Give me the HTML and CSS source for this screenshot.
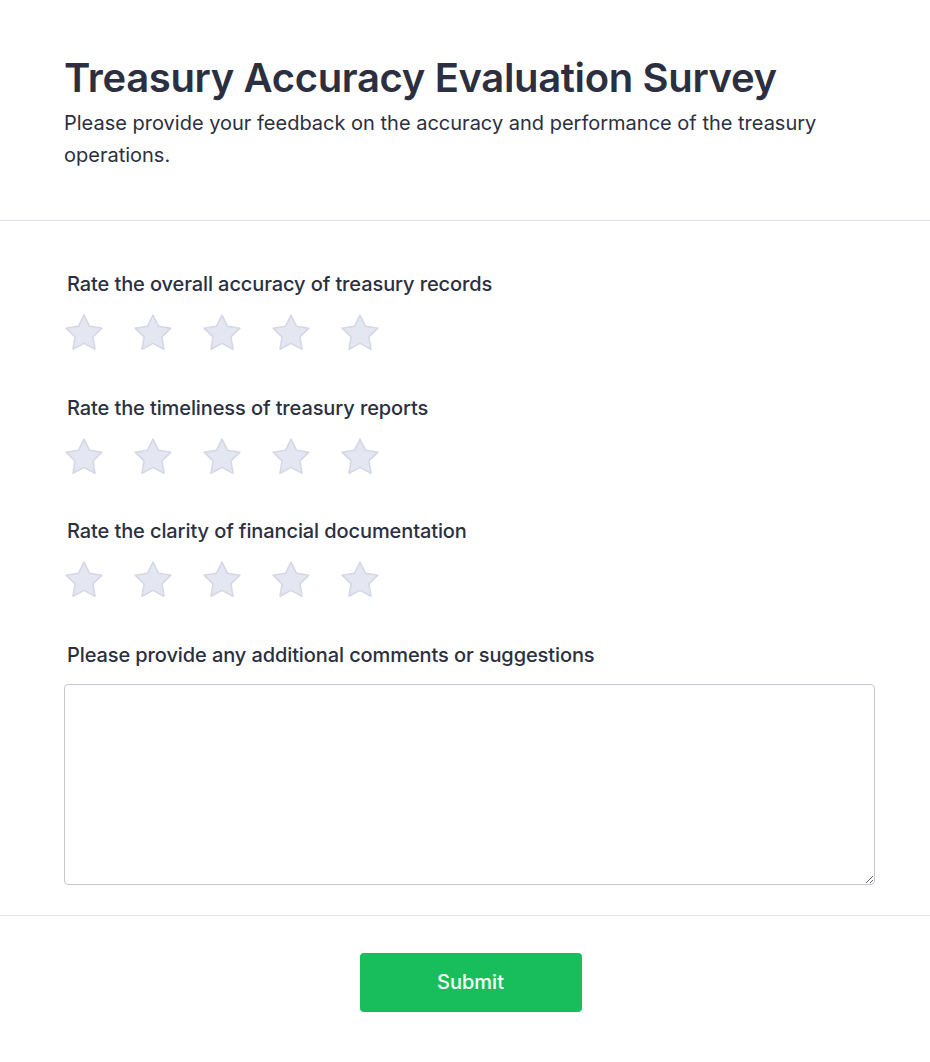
FILE: index.html
```html
<!DOCTYPE html>
<html lang="en">
<head>
<meta charset="utf-8">
<title>Treasury Accuracy Evaluation Survey</title>
<link rel="stylesheet" href="styles.css">
</head>
<body>
<div class="survey">
  <header class="head">
    <h1 class="title">Treasury Accuracy Evaluation Survey</h1>
    <p class="subtitle">Please provide your feedback on the accuracy and performance of the treasury operations.</p>
  </header>
  <main class="body">
    <section class="question">
      <label class="q-label">Rate the overall accuracy of treasury records</label>
      <div class="stars">
        <svg class="star" viewBox="2 2 20 20"><path d="M12 2.6l2.9 5.9 6.5.95-4.7 4.6 1.1 6.5L12 17.5l-5.8 3.05 1.1-6.5-4.7-4.6 6.5-.95z"/></svg>
        <svg class="star" viewBox="2 2 20 20"><path d="M12 2.6l2.9 5.9 6.5.95-4.7 4.6 1.1 6.5L12 17.5l-5.8 3.05 1.1-6.5-4.7-4.6 6.5-.95z"/></svg>
        <svg class="star" viewBox="2 2 20 20"><path d="M12 2.6l2.9 5.9 6.5.95-4.7 4.6 1.1 6.5L12 17.5l-5.8 3.05 1.1-6.5-4.7-4.6 6.5-.95z"/></svg>
        <svg class="star" viewBox="2 2 20 20"><path d="M12 2.6l2.9 5.9 6.5.95-4.7 4.6 1.1 6.5L12 17.5l-5.8 3.05 1.1-6.5-4.7-4.6 6.5-.95z"/></svg>
        <svg class="star" viewBox="2 2 20 20"><path d="M12 2.6l2.9 5.9 6.5.95-4.7 4.6 1.1 6.5L12 17.5l-5.8 3.05 1.1-6.5-4.7-4.6 6.5-.95z"/></svg>
      </div>
    </section>
    <section class="question">
      <label class="q-label">Rate the timeliness of treasury reports</label>
      <div class="stars">
        <svg class="star" viewBox="2 2 20 20"><path d="M12 2.6l2.9 5.9 6.5.95-4.7 4.6 1.1 6.5L12 17.5l-5.8 3.05 1.1-6.5-4.7-4.6 6.5-.95z"/></svg>
        <svg class="star" viewBox="2 2 20 20"><path d="M12 2.6l2.9 5.9 6.5.95-4.7 4.6 1.1 6.5L12 17.5l-5.8 3.05 1.1-6.5-4.7-4.6 6.5-.95z"/></svg>
        <svg class="star" viewBox="2 2 20 20"><path d="M12 2.6l2.9 5.9 6.5.95-4.7 4.6 1.1 6.5L12 17.5l-5.8 3.05 1.1-6.5-4.7-4.6 6.5-.95z"/></svg>
        <svg class="star" viewBox="2 2 20 20"><path d="M12 2.6l2.9 5.9 6.5.95-4.7 4.6 1.1 6.5L12 17.5l-5.8 3.05 1.1-6.5-4.7-4.6 6.5-.95z"/></svg>
        <svg class="star" viewBox="2 2 20 20"><path d="M12 2.6l2.9 5.9 6.5.95-4.7 4.6 1.1 6.5L12 17.5l-5.8 3.05 1.1-6.5-4.7-4.6 6.5-.95z"/></svg>
      </div>
    </section>
    <section class="question">
      <label class="q-label">Rate the clarity of financial documentation</label>
      <div class="stars">
        <svg class="star" viewBox="2 2 20 20"><path d="M12 2.6l2.9 5.9 6.5.95-4.7 4.6 1.1 6.5L12 17.5l-5.8 3.05 1.1-6.5-4.7-4.6 6.5-.95z"/></svg>
        <svg class="star" viewBox="2 2 20 20"><path d="M12 2.6l2.9 5.9 6.5.95-4.7 4.6 1.1 6.5L12 17.5l-5.8 3.05 1.1-6.5-4.7-4.6 6.5-.95z"/></svg>
        <svg class="star" viewBox="2 2 20 20"><path d="M12 2.6l2.9 5.9 6.5.95-4.7 4.6 1.1 6.5L12 17.5l-5.8 3.05 1.1-6.5-4.7-4.6 6.5-.95z"/></svg>
        <svg class="star" viewBox="2 2 20 20"><path d="M12 2.6l2.9 5.9 6.5.95-4.7 4.6 1.1 6.5L12 17.5l-5.8 3.05 1.1-6.5-4.7-4.6 6.5-.95z"/></svg>
        <svg class="star" viewBox="2 2 20 20"><path d="M12 2.6l2.9 5.9 6.5.95-4.7 4.6 1.1 6.5L12 17.5l-5.8 3.05 1.1-6.5-4.7-4.6 6.5-.95z"/></svg>
      </div>
    </section>
    <section class="question last">
      <label class="q-label">Please provide any additional comments or suggestions</label>
      <textarea class="comments"></textarea>
    </section>
  </main>
  <footer class="foot">
    <button class="submit" type="button">Submit</button>
  </footer>
</div>
</body>
</html>
```

FILE: styles.css
```css
* { box-sizing: border-box; }

html, body {
  margin: 0;
  padding: 0;
  background: #ffffff;
}

body {
  font-family: Inter, "Noto Sans", "Liberation Sans", sans-serif;
  color: #2b2f40;
}

.head {
  padding: 54px 55px 49px 64px;
  border-bottom: 1px solid #dddee7;
}

.title {
  margin: 0 0 5px;
  font-size: 40px;
  line-height: 48px;
  font-weight: 600;
  letter-spacing: -0.35px;
  color: #2b2f40;
}

.subtitle {
  margin: 0;
  font-size: 20px;
  line-height: 32px;
  font-weight: 400;
  color: #2b2f40;
}

.body {
  padding: 49px 55px 30px 64px;
  border-bottom: 1px solid #e3e4ea;
}

.question {
  display: flex;
  flex-direction: column;
  gap: 16px;
  margin-bottom: 41.5px;
}

.question.last {
  margin-bottom: 0;
  gap: 15px;
}

.q-label {
  font-size: 20px;
  line-height: 28px;
  font-weight: 500;
  letter-spacing: -0.1px;
  margin-left: 3px;
  color: #2b2f40;
}

.stars {
  display: flex;
  gap: 29px;
}

.star {
  width: 40px;
  height: 38px;
  display: block;
}

.star path {
  fill: #e4e7f1;
  stroke: #d4d7e5;
  stroke-width: 0.8;
  stroke-linejoin: round;
}

.comments {
  display: block;
  width: 100%;
  height: 201px;
  border: 1px solid #c6c7d6;
  border-radius: 4px;
  resize: vertical;
  font-family: inherit;
  font-size: 16px;
  padding: 10px 12px;
}

.foot {
  display: flex;
  justify-content: center;
  padding: 37px 53px 50px 64px;
}

.submit {
  width: 222px;
  height: 59px;
  border: none;
  border-radius: 4px;
  background: #19be5c;
  color: #ffffff;
  font-family: inherit;
  font-size: 20px;
  font-weight: 500;
  cursor: pointer;
}
```
